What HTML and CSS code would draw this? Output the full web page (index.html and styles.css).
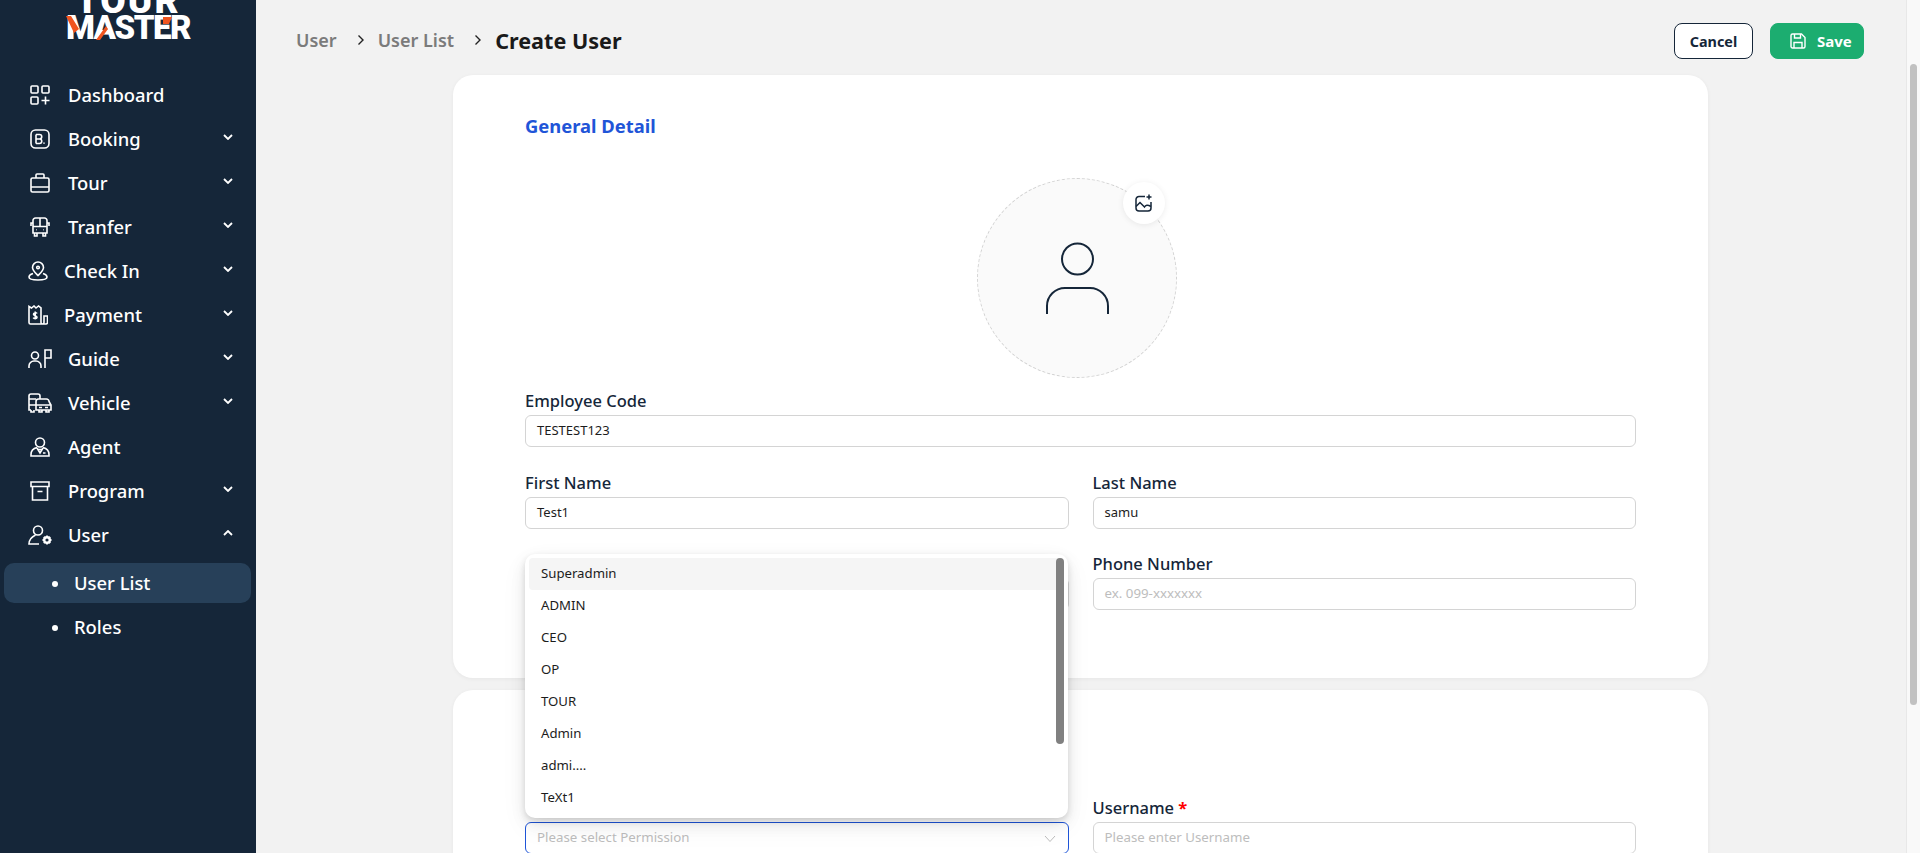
FILE: index.html
```html
<!DOCTYPE html>
<html lang="en">
<head>
<meta charset="utf-8">
<title>Create User</title>
<link rel="stylesheet" href="styles.css">
</head>
<body>
<aside class="sidebar">
  <div class="logo">
    <div class="logo-tour">TOUR</div>
    <div class="logo-master">MASTER</div>
    <svg class="logo-accent" width="123" height="26" viewBox="0 0 123 26"><path d="M0 0h5l8 13-5 4z M30 24h4l8-11-2-3z M97 1h9l-3 7h-6z" fill="#f0541e"/></svg>
  </div>
  <nav class="nav">
    <a class="nav-item"><svg class="ico" viewBox="0 0 20 20"><rect x="1" y="1" width="7" height="7" rx="1"/><rect x="12" y="1" width="7" height="7" rx="1"/><rect x="1" y="12" width="7" height="7" rx="1"/><path d="M15.5 11.5v8M11.5 15.5h8"/></svg><span>Dashboard</span></a>
    <a class="nav-item"><svg class="ico" viewBox="0 0 20 20"><rect x="1" y="1" width="18" height="18" rx="4.5"/><path d="M6 5.500v9M6 5.500h3.500a2.200 2.200 0 0 1 0 4.500H6M9.500 10a2.200 2.200 0 0 1 0 4.500H6M14 13.500v1.200"/></svg><span>Booking</span><svg class="chev" viewBox="0 0 10 6"><path d="M1 1l4 4 4-4"/></svg></a>
    <a class="nav-item"><svg class="ico" viewBox="0 0 20 20"><rect x="1" y="5" width="18" height="14" rx="1.5"/><path d="M6 5V2a1 1 0 0 1 1-1h6a1 1 0 0 1 1 1v3M1 14h18"/></svg><span>Tour</span><svg class="chev" viewBox="0 0 10 6"><path d="M1 1l4 4 4-4"/></svg></a>
    <a class="nav-item"><svg class="ico" viewBox="0 0 20 20"><path d="M3 3.5A2.5 2.5 0 0 1 5.500 1h9A2.500 2.500 0 0 1 17 3.500V16H3zM3 9.500h14M10 1v8.500M3 6H1v3M17 6h2v3M4.500 16v3h2.500v-3M13 16v3h2.500v-3"/><path d="M6 12.800h.6M13.400 12.800h.6"/></svg><span>Tranfer</span><svg class="chev" viewBox="0 0 10 6"><path d="M1 1l4 4 4-4"/></svg></a>
    <a class="nav-item tight"><svg class="ico" viewBox="0 0 20 20"><path d="M10 14.500C7 11.500 4.500 9.500 4.500 6.500a5.500 5.500 0 0 1 11 0c0 3-2.500 5-5.500 8z"/><circle cx="10" cy="6.500" r="1.300"/><path d="M5 12.500C2.500 13.300 1 14.500 1 16c0 2 4 3 9 3s9-1 9-3c0-1.500-1.500-2.700-4-3.500"/></svg><span>Check In</span><svg class="chev" viewBox="0 0 10 6"><path d="M1 1l4 4 4-4"/></svg></a>
    <a class="nav-item tight"><svg class="ico" viewBox="0 0 20 20"><path d="M13.500 19H2.500A1.500 1.500 0 0 1 1 17.500V1.500l2.500 1.500L6 1l2 2 2.500-2 2.500 2v14.500a1.500 1.500 0 0 0 1.500 1.500 1.500 1.500 0 0 0 1.500-1.500V11h3.500v6.500a1.500 1.500 0 0 1-1.500 1.500z"/><path d="M9 8.500C8.500 7.500 5.500 7.500 5.500 9.200S9 10.500 9 12.300s-3 1.700-3.800.3M7.200 6.500v8"/></svg><span>Payment</span><svg class="chev" viewBox="0 0 10 6"><path d="M1 1l4 4 4-4"/></svg></a>
    <a class="nav-item wide"><svg class="ico" viewBox="0 0 24 20"><circle cx="7" cy="6.500" r="3.500"/><path d="M1 19v-2a5 5 0 0 1 5-5h2a5 5 0 0 1 5 5v2M17 19V1h6v8h-6"/></svg><span>Guide</span><svg class="chev" viewBox="0 0 10 6"><path d="M1 1l4 4 4-4"/></svg></a>
    <a class="nav-item wide"><svg class="ico" viewBox="0 0 24 20"><path d="M3 17H1V3a2 2 0 0 1 2-2h7a2 2 0 0 1 2 2v3M1 6h7M1 12h7"/><path d="M8 17V8.500A2.500 2.500 0 0 1 10.500 6h8A2.500 2.500 0 0 1 21 8.500l2 3.500v5zM8 12h15M11 14.500h3M17 14.500h3M3 17v2h3v-2M11 17v2h3v-2M18 17v2h3v-2"/></svg><span>Vehicle</span><svg class="chev" viewBox="0 0 10 6"><path d="M1 1l4 4 4-4"/></svg></a>
    <a class="nav-item"><svg class="ico" viewBox="0 0 20 20"><circle cx="10" cy="5.500" r="4.500"/><path d="M7 10.500C3 11.500 1 14 1 17.500V19h18v-1.500c0-3.500-2-6-6-7M7 11l3 5 3-5M8.500 12.500h3M13 16h2.500"/></svg><span>Agent</span></a>
    <a class="nav-item"><svg class="ico" viewBox="0 0 20 20"><path d="M1 1h18v4.500H1zM2.500 5.500V19h15V5.500M7.500 10.500h5"/></svg><span>Program</span><svg class="chev" viewBox="0 0 10 6"><path d="M1 1l4 4 4-4"/></svg></a>
    <a class="nav-item wide"><svg class="ico" viewBox="0 0 24 20"><circle cx="10" cy="5.500" r="4.500"/><path d="M7.500 10C3.500 12 1 15 1 19h10"/><circle cx="19" cy="15" r="2.800" stroke-width="2.400"/><path d="M19 10.500v1.500M19 18v1.500M14.500 15H16M22 15h1.500M15.800 11.800l1 1M21.200 17.200l1 1M22.200 11.800l-1 1M16.800 17.200l-1 1" stroke-width="1.800"/></svg><span>User</span><svg class="chev" viewBox="0 0 10 6"><path d="M1 5l4-4 4 4"/></svg></a>
    <div class="subnav">
      <a class="sub-item active">User List</a>
      <a class="sub-item">Roles</a>
    </div>
  </nav>
</aside>

<main class="main">
  <header class="topbar">
    <div class="crumbs">
      <span class="crumb">User</span>
      <svg class="crumb-sep" viewBox="0 0 8 12"><path d="M1.500 1.500L6 6l-4.500 4.500"/></svg>
      <span class="crumb">User List</span>
      <svg class="crumb-sep" viewBox="0 0 8 12"><path d="M1.500 1.500L6 6l-4.500 4.500"/></svg>
      <span class="crumb-current">Create User</span>
    </div>
    <div class="actions">
      <button class="btn btn-cancel">Cancel</button>
      <button class="btn btn-save"><svg class="save-ico" viewBox="0 0 16 16"><path d="M1 2.500A1.500 1.500 0 0 1 2.500 1h9L15 4.500v9a1.500 1.500 0 0 1-1.500 1.500h-11A1.500 1.500 0 0 1 1 13.500z"/><path d="M4.500 1v4h6V1M4 15V9.500h8V15"/></svg>Save</button>
    </div>
  </header>

  <section class="card card-general">
    <h2 class="card-title">General Detail</h2>
    <div class="avatar-wrap">
      <div class="avatar">
        <svg class="avatar-person" viewBox="0 0 64 72"><circle cx="32.500" cy="17" r="15.500"/><path d="M2 72v-8a18 18 0 0 1 18-18h25a18 18 0 0 1 18 18v8"/></svg>
        <div class="avatar-btn"><svg class="avatar-btn-ico" viewBox="0 0 18 18"><path d="M10 2.500H4a3 3 0 0 0-3 3v8.500a3 3 0 0 0 3 3h9a3 3 0 0 0 3-3V8"/><path d="M1 12.500l4-4 4.500 4.500c1-2 3-2.500 6.500-.5M14 0.500v5M11.500 3h5"/></svg></div>
      </div>
    </div>
    <div class="fields">
      <div class="field full"><label class="label">Employee Code</label><div class="input">TESTEST123</div></div>
      <div class="field"><label class="label">First Name</label><div class="input">Test1</div></div>
      <div class="field"><label class="label">Last Name</label><div class="input">samu</div></div>
      <div class="field"><label class="label">&nbsp;</label><div class="input">&nbsp;</div></div>
      <div class="field"><label class="label">Phone Number</label><div class="input placeholder">ex. 099-xxxxxxx</div></div>
    </div>
  </section>

  <section class="card card-account">
    <div class="fields">
      <div class="field select-field">
        <label class="label">&nbsp;</label>
        <div class="input input-focus placeholder">Please select Permission<svg class="select-chev" viewBox="0 0 12 8"><path d="M1 1l5 5.500L11 1"/></svg></div>
        <div class="dropdown">
          <div class="option option-active">Superadmin</div>
          <div class="option">ADMIN</div>
          <div class="option">CEO</div>
          <div class="option">OP</div>
          <div class="option">TOUR</div>
          <div class="option">Admin</div>
          <div class="option">admi....</div>
          <div class="option">TeXt1</div>
          <div class="dropdown-thumb"></div>
        </div>
      </div>
      <div class="field"><label class="label">Username <span class="req">*</span></label><div class="input placeholder">Please enter Username</div></div>
    </div>
  </section>
</main>

<div class="page-scrollbar"><div class="page-thumb"></div></div>
</body>
</html>
```

FILE: styles.css
```css
* { box-sizing: border-box; }
html, body { margin: 0; height: 853px; overflow: hidden; }
body {
  display: flex;
  font-family: "Noto Sans", sans-serif;
  background: #f2f2f2;
  color: #152639;
}

/* sidebar */
.sidebar { width: 256px; flex: none; background: #152639; color: #fff; overflow: hidden; }
.logo { display: flow-root; position: relative; height: 73px; text-align: center; color: #fff; font-family: "Roboto", sans-serif; font-weight: 900; }
.logo-tour { height: 30px; margin-top: -14px; font-size: 37px; line-height: 30px; letter-spacing: 2px; }
.logo-master { height: 24px; font-size: 33px; line-height: 24px; letter-spacing: -1.5px; }
.logo-accent { position: absolute; left: 66px; top: 16px; }
.nav { display: flex; flex-direction: column; }
.nav-item { display: flex; align-items: center; height: 44px; padding-left: 30px; gap: 18px; font-size: 18.4px; font-weight: 500; position: relative; }
.nav-item span { margin-bottom: 2px; }
.nav-item.tight { padding-left: 28px; gap: 16px; }
.nav-item.wide { padding-left: 28px; gap: 16px; }
.ico { width: 20px; height: 20px; fill: none; stroke: #fff; stroke-width: 1.6; flex: none; }
.nav-item.wide .ico { width: 24px; }
.chev { position: absolute; right: 23px; top: 17px; width: 10px; height: 6px; fill: none; stroke: #fff; stroke-width: 1.8; }
.subnav { display: flex; flex-direction: column; gap: 4px; margin: 6px 5px 0 4px; }
.sub-item { display: flex; align-items: center; height: 40px; padding: 0 0 2px 70px; border-radius: 10px; font-size: 18.4px; font-weight: 500; position: relative; }
.sub-item::before { content: ""; position: absolute; left: 48px; top: 17.500px; width: 6px; height: 6px; border-radius: 50%; background: #fff; }
.sub-item.active { background: #274059; }

/* main */
.main { flex: 1; min-width: 0; padding-top: 23px; overflow: hidden; }
.topbar { display: flex; align-items: center; justify-content: space-between; height: 36px; padding: 0 42px 0 40px; margin-bottom: 16px; }
.crumbs { display: flex; align-items: center; padding-bottom: 2px; }
.crumb { font-size: 18px; font-weight: 600; color: #7b7b7b; }
.crumb-sep { width: 8px; height: 12px; margin: 0 13px 0 20px; fill: none; stroke: #222; stroke-width: 1.4; }
.crumb-current { font-size: 21.6px; font-weight: 700; color: #1a1a1a; }
.actions { display: flex; gap: 17px; }
.btn { display: flex; align-items: center; justify-content: center; height: 36px; font-family: inherit; font-size: 14.4px; font-weight: 700; border-radius: 8px; }
.btn-cancel { width: 79px; background: #fff; border: 1px solid #152639; color: #152639; }
.btn-save { width: 94px; gap: 11px; padding-left: 19px; justify-content: flex-start; font-size: 15px; background: #1cad70; border: 1px solid #1cad70; color: #fff; }
.save-ico { width: 16px; height: 16px; fill: none; stroke: #fff; stroke-width: 1.4; }

.card { width: 1255px; margin: 0 0 0 197px; background: #fff; border-radius: 20px; padding-left: 72px; padding-right: 72px; box-shadow: 0 1px 4px rgba(0,0,0,.05); }
.card-general { padding-top: 39px; padding-bottom: 68px; }
.card-account { margin-top: 12px; padding-top: 106px; padding-bottom: 40px; }
.card-title { margin: 0; font-size: 18.4px; line-height: 24px; font-weight: 700; color: #1f55d8; }
.avatar-wrap { display: flex; justify-content: center; margin: 40px 0 11px; padding-right: 7px; }
.avatar { position: relative; width: 200px; height: 200px; border-radius: 50%; background: #fafafa; border: 1px dashed #d2d2d2; display: flex; align-items: center; justify-content: center; }
.avatar-person { width: 64px; height: 72px; fill: none; stroke: #152639; stroke-width: 2; }
.avatar-btn { position: absolute; left: 145px; top: 3px; width: 42px; height: 42px; border-radius: 50%; background: #fff; box-shadow: 0 1px 6px rgba(0,0,0,.08); display: flex; align-items: center; justify-content: center; }
.avatar-btn-ico { width: 18px; height: 18px; fill: none; stroke: #152639; stroke-width: 1.5; }

.fields { display: grid; grid-template-columns: 1fr 1fr; column-gap: 24px; row-gap: 23.5px; }
.field { min-width: 0; position: relative; }
.field.full { grid-column: 1 / -1; }
.label { display: block; height: 24px; margin-bottom: 2px; font-size: 16.5px; line-height: 23px; font-weight: 500; color: #152639; }
.input { position: relative; height: 32px; padding: 0 11px 2px; display: flex; align-items: center; font-size: 13px; border: 1px solid #d4d4d4; border-radius: 6px; color: #1c1c1c; background: #fff; }
.placeholder { color: #bdbdbd; font-size: 13.3px; }
.input-focus { border-color: #1f55d8; }
.select-chev { position: absolute; right: 12px; top: 12px; width: 12px; height: 8px; fill: none; stroke: #bdbdbd; stroke-width: 1; }
.req { color: #f00; font-weight: 700; }

.dropdown { position: absolute; left: 0; right: 1px; bottom: 36px; padding: 4px; background: #fff; border-radius: 10px; box-shadow: 0 6px 16px rgba(0,0,0,.08), 0 3px 6px rgba(0,0,0,.12), 0 9px 28px rgba(0,0,0,.05); z-index: 5; }
.option { height: 32px; padding: 0 12px 2px; display: flex; align-items: center; font-size: 13.2px; color: #1c1c1c; border-radius: 4px; }
.option-active { background: #f5f5f5; }
.dropdown-thumb { position: absolute; top: 4px; right: 4px; width: 8px; height: 186px; border-radius: 4px; background: #808080; }

.page-scrollbar { width: 14px; flex: none; background: #f9f9f9; border-left: 1px solid #e8e8e8; padding: 64px 3px 0 3px; }
.page-thumb { height: 641px; border-radius: 4px; background: #c1c1c1; }
```
